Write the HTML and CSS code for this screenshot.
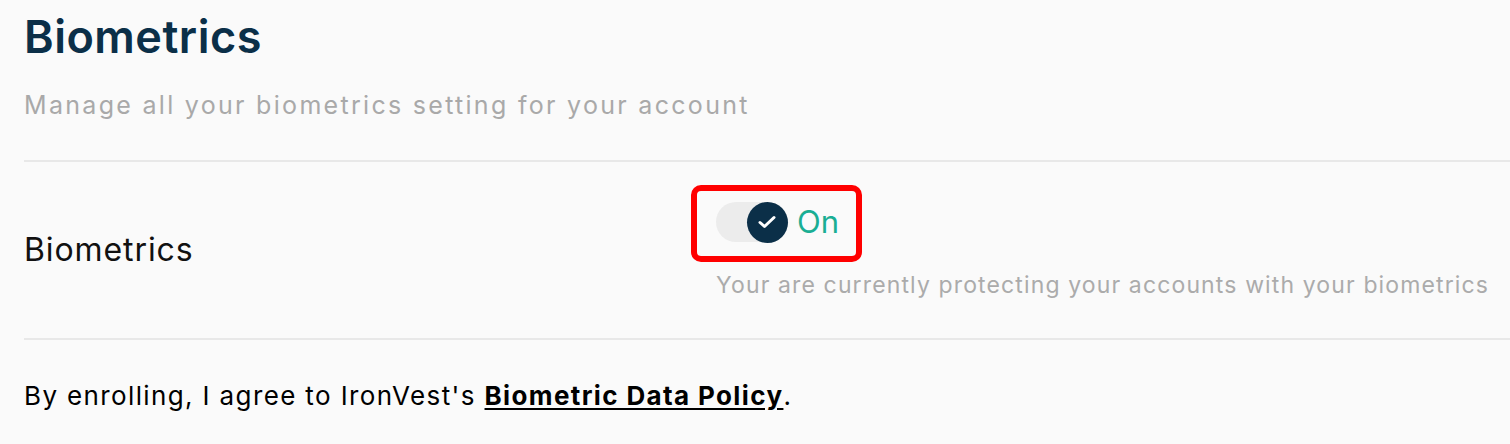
FILE: index.html
```html
<!DOCTYPE html>
<html lang="en">
<head>
<meta charset="utf-8">
<title>Biometrics</title>
<link rel="stylesheet" href="styles.css">
</head>
<body>
<main class="page">
  <header class="header">
    <h1 class="title">Biometrics</h1>
    <p class="subtitle">Manage all your biometrics setting for your account</p>
  </header>
  <section class="row">
    <div class="label">Biometrics</div>
    <div class="control">
      <div class="highlight">
        <span class="track">
          <span class="knob">
            <svg width="18" height="14" viewBox="0 0 18 14" aria-hidden="true"><path d="M2 7.5 L6.5 11.5 L16 2.5" fill="none" stroke="#fff" stroke-width="3" stroke-linecap="round" stroke-linejoin="round"/></svg>
          </span>
        </span>
        <span class="state">On</span>
      </div>
      <p class="hint">Your are currently protecting your accounts with your biometrics</p>
    </div>
  </section>
  <footer class="footer">
    <p class="agree">By enrolling, I agree to IronVest's <a class="policy" href="#">Biometric Data Policy</a>.</p>
  </footer>
</main>
</body>
</html>
```
FILE: styles.css
```css
* { box-sizing: border-box; }
html, body { margin: 0; padding: 0; }
body {
  background: #fafafa;
  font-family: Inter, "Noto Sans", "Liberation Sans", sans-serif;
  color: #111;
}
.page {
  padding-left: 24px;
}
.header {
  padding-top: 12px;
  border-bottom: 2px solid #e8e8e8;
  height: 162px;
}
.title {
  margin: 0;
  font-size: 45px;
  line-height: 50px;
  font-weight: 600;
  color: #0b2f48;
  letter-spacing: 0.5px;
}
.subtitle {
  margin: 26px 0 0;
  font-size: 25px;
  line-height: 34px;
  color: #a9a9a9;
  letter-spacing: 2.3px;
}
.row {
  display: grid;
  grid-template-columns: 667px 1fr;
  min-height: 178px;
  border-bottom: 2px solid #e8e8e8;
}
.label {
  align-self: center;
  font-size: 32px;
  line-height: 40px;
  color: #111;
  letter-spacing: 0.9px;
}
.control {
  padding-top: 23px;
}
.highlight {
  display: inline-flex;
  align-items: center;
  border: 6px solid #ff0000;
  border-radius: 10px;
  padding: 11px 17px 14px 19px;
}
.track {
  display: flex;
  justify-content: flex-end;
  width: 72px;
  height: 40px;
  border-radius: 20px;
  background: #ececec;
}
.knob {
  display: flex;
  align-items: center;
  justify-content: center;
  width: 41px;
  height: 41px;
  margin-top: -0.5px;
  border-radius: 50%;
  background: #0b2f48;
}
.knob svg {
  margin-right: 2px;
}
.state {
  margin-left: 9px;
  font-size: 31px;
  line-height: 40px;
  color: #1aae94;
}
.hint {
  margin: 8px 0 0 25px;
  font-size: 23px;
  line-height: 30px;
  color: #ababab;
  letter-spacing: 1.13px;
}
.footer {
  padding-top: 38px;
}
.agree {
  margin: 0;
  font-size: 26px;
  line-height: 36px;
  color: #000;
  letter-spacing: 1.37px;
}
.policy {
  color: #000;
  font-weight: 700;
  text-decoration: underline;
  text-underline-offset: 3px;
}
```
